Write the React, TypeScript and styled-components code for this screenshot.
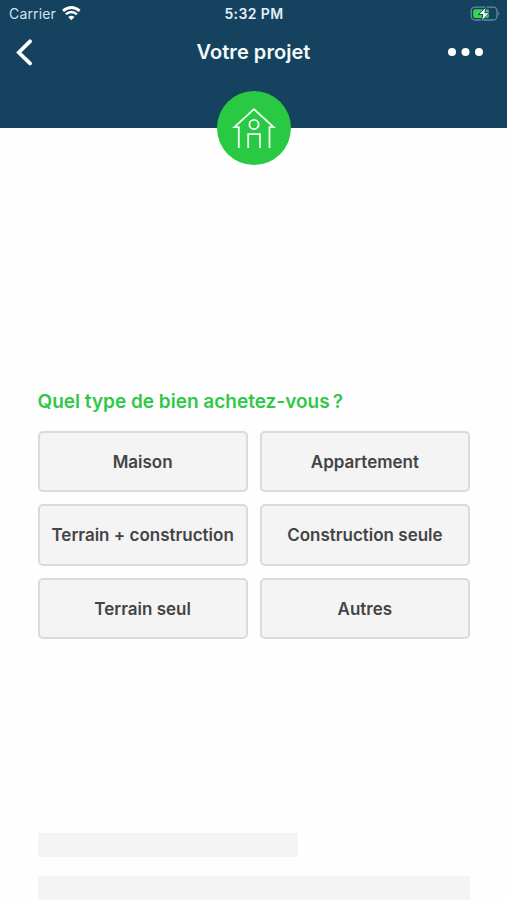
import React from "react";
import styled, { createGlobalStyle } from "styled-components";

const GlobalStyle = createGlobalStyle`
  * { box-sizing: border-box; }
  html, body { margin: 0; padding: 0; background: #fefefe; }
  body { font-family: Inter, "Liberation Sans", sans-serif; overflow: hidden; }
`;

const Screen = styled.div`
  display: flex;
  flex-direction: column;
  width: 507px;
  height: 900px;
  overflow: hidden;
  background: #fefefe;
`;

const Header = styled.header`
  display: flex;
  flex-direction: column;
  align-items: center;
  flex: none;
  height: 128px;
  background: #14425f;
  color: #f4fafd;
`;

const StatusBar = styled.div`
  display: grid;
  grid-template-columns: 1fr auto 1fr;
  align-items: center;
  width: 100%;
  height: 27px;
  padding: 0 6px 0 7px;
`;

const Carrier = styled.div`
  display: flex;
  align-items: center;
  gap: 6px;
  padding-left: 2px;
  font-size: 14px;
  letter-spacing: 0.15px;
  line-height: 27px;
  color: #d3e2ec;
`;

const Time = styled.div`
  padding-top: 1px;
  font-size: 14px;
  font-weight: 600;
  letter-spacing: 0.4px;
  line-height: 26px;
  color: #e4f0f7;
`;

const BatteryIcon = styled.svg`
  justify-self: end;
  display: block;
`;

const NavBar = styled.nav`
  display: grid;
  grid-template-columns: 1fr auto 1fr;
  align-items: center;
  width: 100%;
  height: 50px;
  padding: 0 23px 0 15px;
`;

const Title = styled.h1`
  margin: 0 0 0 8px;
  font-size: 20px;
  font-weight: 600;
  letter-spacing: 0.05px;
  line-height: 50px;
`;

const IconButton = styled.button<{ $end?: boolean }>`
  display: block;
  justify-self: ${(p) => (p.$end ? "end" : "start")};
  padding: 0;
  border: 0;
  background: none;
  svg { display: block; }
`;

const Badge = styled.div`
  flex: none;
  width: 74px;
  height: 74px;
  margin-top: 14px;
  border-radius: 50%;
  background: #2ac943;
  svg { display: block; }
`;

const Content = styled.main`
  display: flex;
  flex-direction: column;
  padding: 258px 37px 0 37.5px;
`;

const Question = styled.h2`
  margin: 0;
  height: 31px;
  font-size: 19px;
  font-weight: 600;
  line-height: 31px;
  color: #30c849;
  white-space: nowrap;
`;

const Options = styled.div`
  display: grid;
  grid-template-columns: 1fr 1fr;
  gap: 12px;
  margin-top: 14px;
`;

const Option = styled.button`
  height: 61.33px;
  padding: 1px 0 0;
  border: 2px solid #dadada;
  border-radius: 5px;
  background: #f4f4f4;
  color: #444446;
  font-family: inherit;
  font-size: 17px;
  font-weight: 600;
  white-space: nowrap;
`;

const Skeleton = styled.div`
  display: flex;
  flex-direction: column;
  gap: 19px;
  margin-top: 194px;
`;

const SkeletonBar = styled.div<{ $width: string }>`
  width: ${(p) => p.$width};
  height: 24px;
  background: #f4f4f4;
`;

const options = [
  "Maison",
  "Appartement",
  "Terrain + construction",
  "Construction seule",
  "Terrain seul",
  "Autres",
];

const Wifi = () => (
  <svg width="19" height="15" viewBox="0 0 19 15" fill="none" stroke="#fff">
    <path d="M1 4.9Q9.3-1.9 17.7 4.9" strokeWidth="2.7" />
    <path d="M3.8 8.2Q9.3 3.6 14.9 8.2" strokeWidth="2.4" />
    <path d="M6.2 11Q9.3 8.3 12.5 11L9.35 14.2Z" fill="#fff" stroke="none" />
  </svg>
);

const Battery = () => (
  <BatteryIcon width="31" height="16" viewBox="0 0 31 16">
    <rect x="1.2" y="1.2" width="25.8" height="12.8" rx="3.8" fill="none" stroke="#668b9e" strokeWidth="1.3" />
    <rect x="3.2" y="3.2" width="15.8" height="8.8" rx="2" fill="#35d84c" />
    <path d="M28.4 5.4q2 2.2 0 4.4z" fill="#668b9e" />
    <path d="M16.4 .6 8.4 8.5h4.5l-1.6 6.7 8.4-8.4h-4.9z" fill="#fff" stroke="#14425f" strokeWidth="1" />
  </BatteryIcon>
);

const House = () => (
  <svg width="74" height="74" viewBox="217 91 74 74" fill="none" stroke="#effff1" strokeWidth="1.8">
    <path d="M238.8 148V127.2H234.4L254 109.2L273.6 127.2H269.5V148" />
    <circle cx="254" cy="124.4" r="4.6" />
    <path d="M248.2 148V134.2H260V148" />
  </svg>
);

export default function App() {
  return (
    <>
      <GlobalStyle />
      <Screen>
        <Header>
          <StatusBar>
            <Carrier>
              Carrier
              <Wifi />
            </Carrier>
            <Time>5:32 PM</Time>
            <Battery />
          </StatusBar>
          <NavBar>
            <IconButton aria-label="Retour">
              <svg width="20" height="28" viewBox="0 0 20 28" fill="none" stroke="#fff" strokeWidth="3.8" strokeLinecap="round">
                <path d="M15 3.3 3.8 14.5 15 25.4" />
              </svg>
            </IconButton>
            <Title>Votre projet</Title>
            <IconButton $end aria-label="Plus">
              <svg width="37" height="10" viewBox="0 0 37 10" fill="#fff">
                <circle cx="5" cy="5" r="4" />
                <circle cx="18.5" cy="5" r="4" />
                <circle cx="32" cy="5" r="4" />
              </svg>
            </IconButton>
          </NavBar>
          <Badge>
            <House />
          </Badge>
        </Header>
        <Content>
          <Question>Quel type de bien achetez-vous&#8239;?</Question>
          <Options>
            {options.map((label) => (
              <Option key={label}>{label}</Option>
            ))}
          </Options>
          <Skeleton>
            <SkeletonBar $width="260px" />
            <SkeletonBar $width="100%" />
          </Skeleton>
        </Content>
      </Screen>
    </>
  );
}
